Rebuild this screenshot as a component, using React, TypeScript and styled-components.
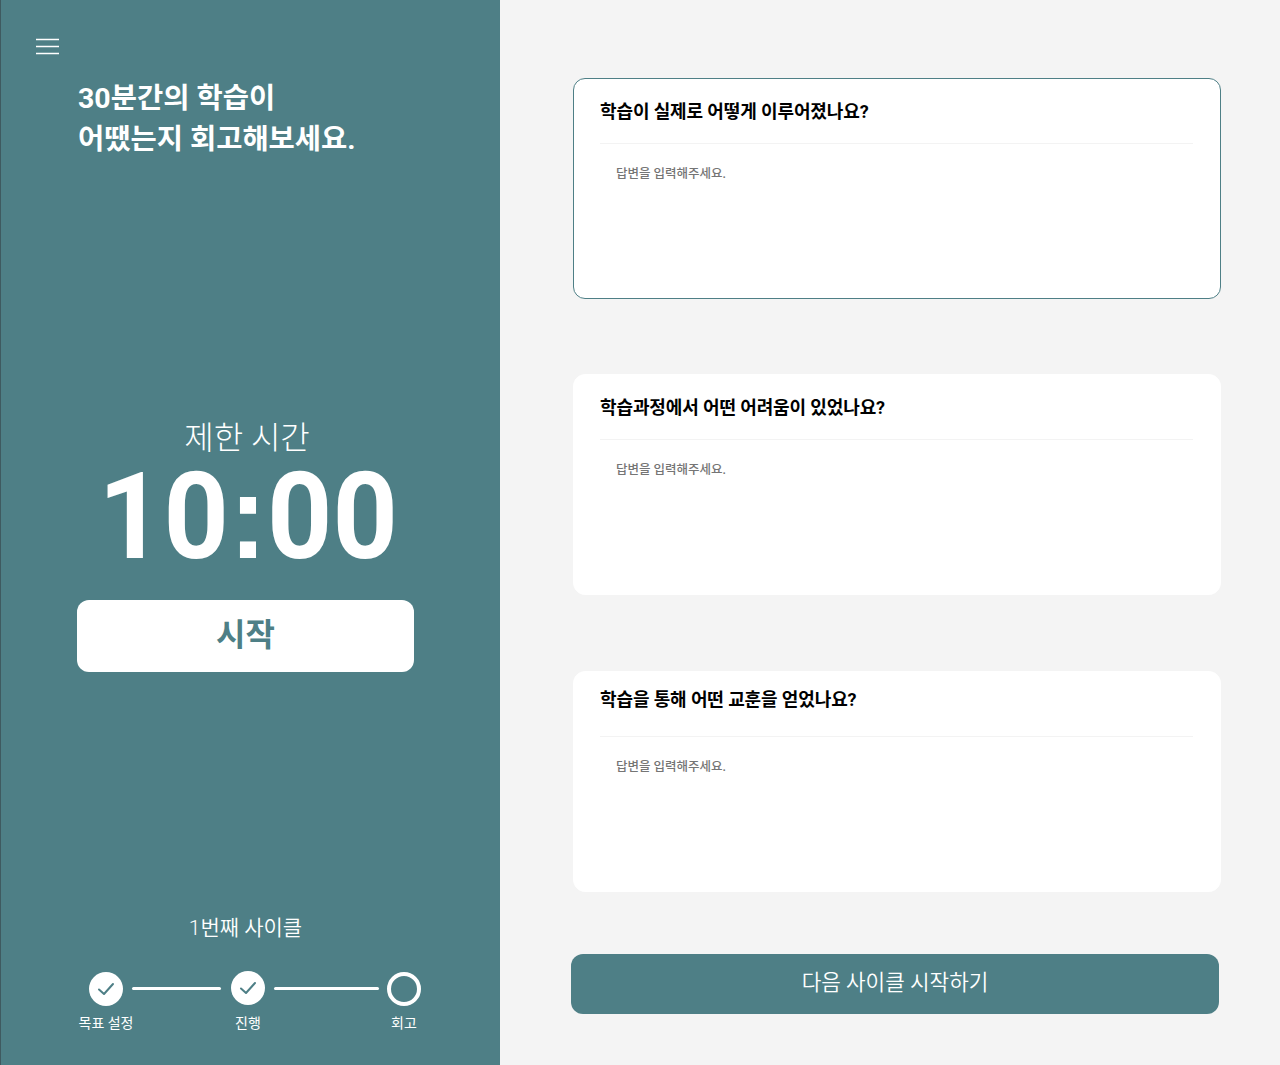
import React from "react";
import styled, { createGlobalStyle } from "styled-components";

const Global = createGlobalStyle`
  html, body { margin: 0; padding: 0; background: #f4f4f4; }
  * { box-sizing: border-box; }
  body { font-family: "Roboto", "Noto Sans CJK KR", sans-serif; }
`;

const teal = "#4e7f86";

const Page = styled.div`
  display: grid;
  grid-template-columns: 500px 1fr;
  width: 1280px;
  height: 1065px;
  overflow: hidden;
`;

const Side = styled.aside`
  background: ${teal};
  border-left: 1px solid #3f5a60;
  color: #fff;
  display: flex;
  flex-direction: column;
  padding: 36px 0 0 35px;
`;

const Menu = styled.button`
  display: block;
  width: 24px;
  height: 20px;
  padding: 0;
  border: 0;
  background: none;
  color: #fff;
`;

const Title = styled.h1`
  margin: 22px 0 0 42px;
  font-size: 28.5px;
  font-weight: 700;
  line-height: 41px;
`;

const Center = styled.section`
  margin: 262px 0 0 -35px;
  display: flex;
  flex-direction: column;
  align-items: stretch;
  height: 259px;
`;

const Limit = styled.div`
  text-align: center;
  font-size: 32px;
  font-weight: 300;
  line-height: 32px;
  margin-left: -7px;
`;

const Clock = styled.div`
  text-align: center;
  font-size: 114px;
  font-weight: 700;
  line-height: 116px;
  margin: 4px 0 0 -5px;
  transform: scaleY(1.065);
`;

const ClockColon = styled.span`
  font-family: "Liberation Sans", sans-serif;
`;

const Start = styled.button`
  margin: 26px 0 0 76px;
  width: 337px;
  height: 72px;
  border: 0;
  border-radius: 12px;
  background: #fff;
  color: ${teal};
  font-family: inherit;
  font-size: 32px;
  font-weight: 700;
  padding: 0 0 8px;
`;

const Cycle = styled.div`
  margin: 232px 0 0 -35px;
  text-align: center;
  font-size: 21px;
  font-weight: 350;
  line-height: 30px;
  width: 489px;
`;

const Steps = styled.ol`
  list-style: none;
  margin: 29px 0 0 53px;
  padding: 0;
  display: flex;
  align-items: flex-start;
`;

const Step = styled.li<{ $l?: number; $up?: number }>`
  width: 34px;
  display: flex;
  flex-direction: column;
  align-items: center;
  flex: none;
  margin-left: ${(p) => p.$l ?? 0}px;
  margin-top: ${(p) => -(p.$up ?? 0)}px;
`;

const Dot = styled.span<{ $done: boolean }>`
  width: 34px;
  height: 34px;
  border-radius: 50%;
  display: flex;
  align-items: center;
  justify-content: center;
  background: ${(p) => (p.$done ? "#fff" : "transparent")};
  border: ${(p) => (p.$done ? "0" : "4px solid #fff")};
  color: ${teal};
`;

const StepLabel = styled.span<{ $down?: number }>`
  margin-top: ${(p) => 7 + (p.$down ?? 0)}px;
  font-size: 14px;
  line-height: 20px;
  white-space: nowrap;
`;

const Line = styled.span<{ $w: number; $l: number }>`
  flex: none;
  width: ${(p) => p.$w}px;
  height: 3px;
  border-radius: 2px;
  background: #fff;
  margin: 15px 0 0 ${(p) => p.$l}px;
`;

const Main = styled.main`
  display: flex;
  flex-direction: column;
  padding: 78px 0 0 73px;
`;

const Card = styled.article<{ $active?: boolean; $gap: number }>`
  width: 648px;
  height: 221px;
  background: #fff;
  border-radius: 12px;
  border: 1px solid ${(p) => (p.$active ? teal : "#fff")};
  padding: 0 27px 0 26px;
  margin-bottom: ${(p) => p.$gap}px;
`;

const Question = styled.h2<{ $line: number }>`
  margin: 0;
  height: 65px;
  border-bottom: 1px solid #f3f3f3;
  font-size: 18px;
  font-weight: 700;
  line-height: ${(p) => p.$line}px;
  letter-spacing: -0.12px;
  color: #000;
`;

const Answer = styled.textarea`
  display: block;
  width: 100%;
  height: 120px;
  margin-top: 20px;
  padding: 0 16px;
  border: 0;
  outline: 0;
  resize: none;
  background: transparent;
  font-family: inherit;
  font-size: 12.5px;
  font-weight: 500;
  line-height: 20px;
  &::placeholder { color: #757575; opacity: 1; }
`;

const Next = styled.button`
  width: 648px;
  height: 60px;
  margin: -13px 0 0 -2px;
  border: 0;
  border-radius: 12px;
  background: ${teal};
  color: #fff;
  font-family: inherit;
  font-size: 21.3px;
  font-weight: 350;
  padding: 0 0 8px;
`;

const Check = () => (
  <svg width="18" height="14" viewBox="0 0 18 14" fill="none" stroke="currentColor" strokeWidth="2" strokeLinecap="round" strokeLinejoin="round">
    <path d="M2 7.5l5 4.5 9-10" />
  </svg>
);

const questions = [
  { text: "학습이 실제로 어떻게 이루어졌나요?", line: 66, gap: 75 },
  { text: "학습과정에서 어떤 어려움이 있었나요?", line: 66, gap: 76 },
  { text: "학습을 통해 어떤 교훈을 얻었나요?", line: 56, gap: 75 },
];

export default function App() {
  return (
    <Page>
      <Global />
      <Side>
        <Menu aria-label="메뉴">
          <svg width="24" height="20" viewBox="0 0 24 20" stroke="currentColor" strokeWidth="1.6">
            <path d="M0 3.5h23M0 10.5h23M0 17.5h23" />
          </svg>
        </Menu>
        <Title>
          30분간의 학습이
          <br />
          어땠는지 회고해보세요.
        </Title>
        <Center>
          <Limit>제한 시간</Limit>
          <Clock>10<ClockColon>:</ClockColon>00</Clock>
          <Start>시작</Start>
        </Center>
        <Cycle>1번째 사이클</Cycle>
        <Steps>
          <Step>
            <Dot $done><Check /></Dot>
            <StepLabel>목표 설정</StepLabel>
          </Step>
          <Line $w={89} $l={9} />
          <Step $l={10} $up={1}>
            <Dot $done><Check /></Dot>
            <StepLabel $down={1}>진행</StepLabel>
          </Step>
          <Line $w={105} $l={9} />
          <Step $l={8}>
            <Dot $done={false} />
            <StepLabel>회고</StepLabel>
          </Step>
        </Steps>
      </Side>
      <Main>
        {questions.map((q, i) => (
          <Card key={q.text} $active={i === 0} $gap={q.gap}>
            <Question $line={q.line}>{q.text}</Question>
            <Answer placeholder="답변을 입력해주세요." />
          </Card>
        ))}
        <Next>다음 사이클 시작하기</Next>
      </Main>
    </Page>
  );
}
